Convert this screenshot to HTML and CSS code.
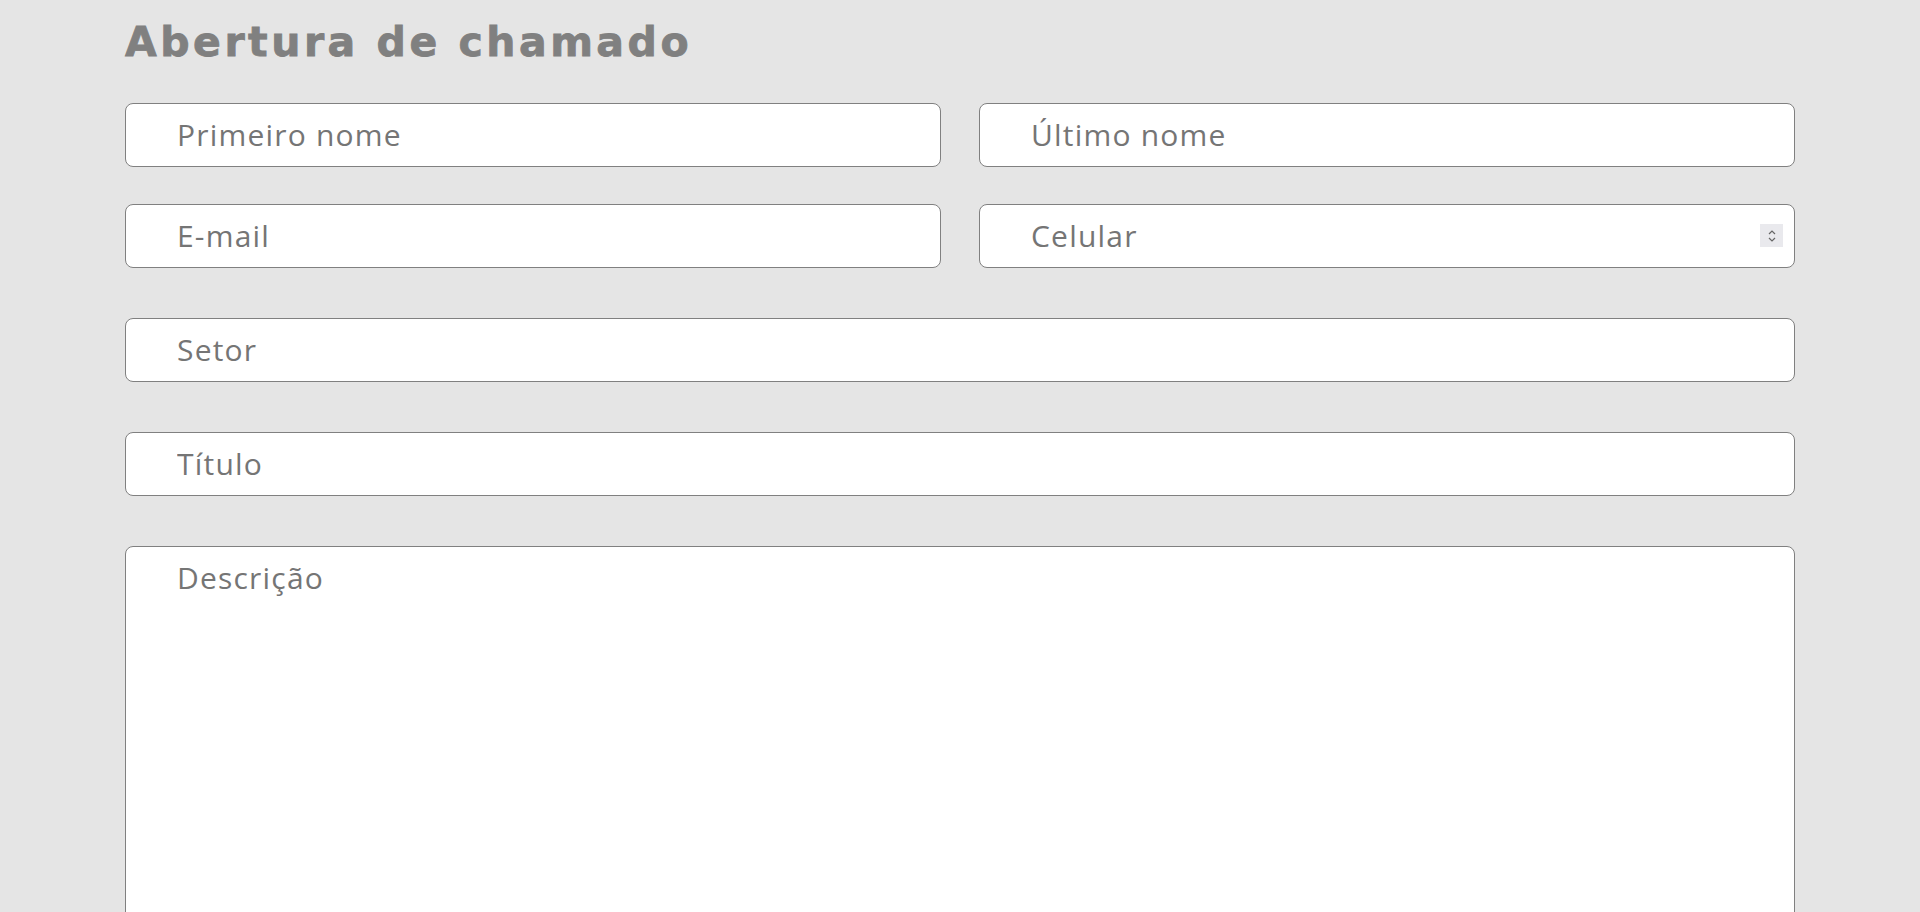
FILE: index.html
```html
<!DOCTYPE html>
<html lang="pt-BR">
<head>
<meta charset="utf-8">
<title>Abertura de chamado</title>
<link rel="stylesheet" href="styles.css">
</head>
<body>
<main class="page">
  <h1 class="title">Abertura de chamado</h1>
  <form class="form">
    <div class="row two">
      <input class="field" type="text" placeholder="Primeiro nome">
      <input class="field" type="text" placeholder="Último nome">
    </div>
    <div class="row two">
      <input class="field" type="email" placeholder="E-mail">
      <div class="field-wrap">
        <input class="field" type="text" placeholder="Celular">
        <span class="spin">
          <svg width="12" height="18" viewBox="0 0 12 18"><path d="M3 7 L6 4 L9 7" fill="none" stroke="#666" stroke-width="1.2"/><path d="M3 11 L6 14 L9 11" fill="none" stroke="#666" stroke-width="1.2"/></svg>
        </span>
      </div>
    </div>
    <div class="row single">
      <input class="field" type="text" placeholder="Setor">
    </div>
    <div class="row single">
      <input class="field" type="text" placeholder="Título">
    </div>
    <div class="row single">
      <textarea class="field area" placeholder="Descrição"></textarea>
    </div>
  </form>
</main>
</body>
</html>
```
FILE: styles.css
```css
html, body {
  margin: 0;
  padding: 0;
  background: #e5e5e5;
}
body {
  font-family: "Open Sans", "Liberation Sans", sans-serif;
  overflow: hidden;
}
.page {
  width: 1670px;
  margin: 0 auto;
  padding-top: 15px;
}
.title {
  margin: 0 0 34px 0;
  font-family: "DejaVu Sans", "Liberation Sans", sans-serif;
  font-weight: 700;
  font-size: 41px;
  line-height: 54px;
  letter-spacing: 3.5px;
  color: #808080;
  -webkit-text-stroke: 0.8px #808080;
}
.form {
  display: flex;
  flex-direction: column;
}
.row {
  display: grid;
  column-gap: 38px;
}
.row.two {
  grid-template-columns: 1fr 1fr;
  margin-bottom: 37px;
}
.row.two + .row.single {
  margin-top: 13px;
}
.row.single {
  grid-template-columns: 1fr;
  margin-bottom: 50px;
}
.field-wrap {
  position: relative;
  display: flex;
}
.field {
  box-sizing: border-box;
  width: 100%;
  height: 64px;
  border: 1px solid #808080;
  border-radius: 8px;
  background: #fff;
  padding: 0 20px 2px 51px;
  font-family: "Open Sans", "Liberation Sans", sans-serif;
  font-size: 30px;
  letter-spacing: 1.2px;
  color: #757575;
  outline: none;
}
.field::placeholder {
  color: #757575;
  opacity: 1;
}
.area {
  height: 420px;
  resize: none;
  padding-top: 10px;
  line-height: 42px;
}
.spin {
  position: absolute;
  right: 12px;
  top: 20px;
  width: 23px;
  height: 23px;
  background: #e9e9ed;
  display: flex;
  align-items: center;
  justify-content: center;
}
```
